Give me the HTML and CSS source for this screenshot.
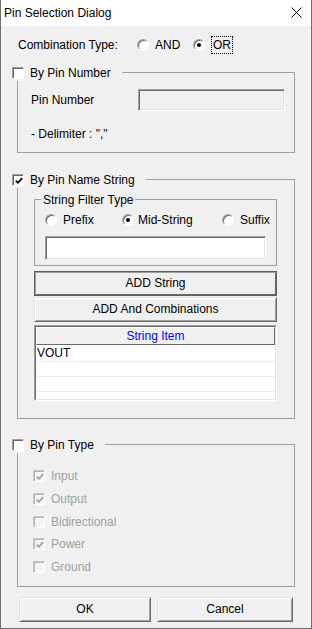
FILE: index.html
```html
<!DOCTYPE html>
<html lang="en">
<head>
    <meta charset="UTF-8">
    <title>Pin Selection Dialog</title>
    <link rel="stylesheet" href="styles.css">
</head>
<body>
<div class="window">
    <div class="titlebar">
        <span class="title">Pin Selection Dialog</span>
        <svg class="close" width="11" height="11" viewBox="0 0 11 11">
            <path d="M0.5 0.5 L10.5 10.5 M10.5 0.5 L0.5 10.5" stroke="#000" stroke-width="1" fill="none"/>
        </svg>
    </div>

    <div class="combo">
        <span class="combo-label">Combination Type:</span>
        <span class="opt opt-and"><span class="radio"></span>AND</span>
        <span class="opt"><span class="radio on"></span><span class="focus">OR</span></span>
    </div>

    <!-- by pin number -->
    <div class="group group-num">
        <div class="group-title"><span class="check"></span>By Pin Number</div>
        <div class="field-row">
            <span class="field-label">Pin Number</span>
            <span class="edit edit-off"></span>
        </div>
        <div class="note">- Delimiter : ","</div>
    </div>

    <!-- by pin name string -->
    <div class="group group-name">
        <div class="group-title">
            <span class="check">
                <svg width="8" height="8" viewBox="0 0 8 8"><polyline points="0.8,3.6 2.9,5.8 7.2,1.2" stroke="#000" stroke-width="1.8" fill="none"/></svg>
            </span>By Pin Name String
        </div>

        <div class="subgroup">
            <div class="sub-title">String Filter Type</div>
            <div class="radio-row">
                <span class="opt opt-prefix"><span class="radio"></span>Prefix</span>
                <span class="opt opt-mid"><span class="radio on"></span>Mid-String</span>
                <span class="opt opt-suffix"><span class="radio"></span>Suffix</span>
            </div>
            <span class="edit edit-filter"></span>
        </div>

        <div class="btn btn-default btn-wide">ADD String</div>
        <div class="btn btn-wide btn-combo">ADD And Combinations</div>

        <div class="list">
            <div class="list-inner">
                <div class="list-head">String Item</div>
                <div class="list-row first">VOUT</div>
                <div class="list-row"></div>
                <div class="list-row"></div>
                <div class="list-row"></div>
            </div>
        </div>
    </div>

    <!-- by pin type -->
    <div class="group group-type">
        <div class="group-title"><span class="check"></span>By Pin Type</div>
        <div class="type-list">
            <div class="type-item"><span class="check off"><svg width="8" height="8" viewBox="0 0 8 8"><polyline points="0.8,3.6 2.9,5.8 7.2,1.2" stroke="#a0a0a0" stroke-width="1.8" fill="none"/></svg></span>Input</div>
            <div class="type-item"><span class="check off"><svg width="8" height="8" viewBox="0 0 8 8"><polyline points="0.8,3.6 2.9,5.8 7.2,1.2" stroke="#a0a0a0" stroke-width="1.8" fill="none"/></svg></span>Output</div>
            <div class="type-item"><span class="check off"></span>Bidirectional</div>
            <div class="type-item"><span class="check off"><svg width="8" height="8" viewBox="0 0 8 8"><polyline points="0.8,3.6 2.9,5.8 7.2,1.2" stroke="#a0a0a0" stroke-width="1.8" fill="none"/></svg></span>Power</div>
            <div class="type-item"><span class="check off"></span>Ground</div>
        </div>
    </div>

    <div class="buttons">
        <div class="btn btn-ok">OK</div>
        <div class="btn btn-cancel">Cancel</div>
    </div>
</div>
</body>
</html>
```

FILE: styles.css
```css
body {
    margin: 0;
    background-color: #f0f0f0;
    font: 12px "Liberation Sans", Arial, sans-serif;
    color: #000;
}

.window {
    width: 312px;
    height: 629px;
    box-sizing: border-box;
    border: 1px solid #6e6e6e;
    border-top: none;
    background-color: #f0f0f0;
    overflow: hidden;
}

.titlebar {
    height: 26px;
    background-color: #fff;
    display: flex;
    align-items: center;
    justify-content: space-between;
    padding: 0 9px 1px 3px;
    box-sizing: border-box;
}

.combo {
    margin-top: 10px;
    height: 18px;
    padding-left: 17px;
    display: flex;
    align-items: center;
}

.combo-label {
    width: 119px;
}

.opt {
    display: flex;
    align-items: center;
}

.opt-and {
    width: 56px;
}

.opt-and .radio {
    margin-right: 6px;
}

.focus {
    outline: 1px dotted #000;
    padding: 0 1px;
    line-height: 16px;
    margin-left: 1px;
}

/* radio + checkbox */
.radio {
    width: 12px;
    height: 12px;
    box-sizing: border-box;
    border-radius: 50%;
    border: 1px solid;
    border-color: #a0a0a0 #fff #fff #a0a0a0;
    box-shadow: inset 1px 1px 0 #696969;
    background-color: #fff;
    margin-right: 6px;
    display: inline-flex;
    align-items: center;
    justify-content: center;
    flex-shrink: 0;
}

.radio.on::after {
    content: "";
    width: 4px;
    height: 4px;
    border-radius: 50%;
    background-color: #000;
}

.check {
    width: 12px;
    height: 12px;
    box-sizing: border-box;
    border: 1px solid;
    border-color: #a0a0a0 #fff #fff #a0a0a0;
    box-shadow: inset 1px 1px 0 #696969;
    background-color: #fff;
    margin-right: 6px;
    display: inline-flex;
    align-items: center;
    justify-content: center;
    padding: 1px 0 0 1px;
    flex-shrink: 0;
}

.check.off {
    background-color: #f4f4f4;
    border-color: #c8c8c8 #fff #fff #c8c8c8;
    box-shadow: inset 1px 1px 0 #b4b4b4;
}

/* group boxes */
.group {
    margin: 0 16px;
    border: 1px solid #a0a0a0;
    box-sizing: border-box;
}

.group-title {
    margin: -8px 0 0 -6px;
    height: 16px;
    width: max-content;
    display: flex;
    align-items: center;
    background-color: #f0f0f0;
    padding-right: 11px;
}

.group-num {
    margin-top: 18px;
    height: 81px;
}

.field-row {
    margin-top: 8px;
    height: 22px;
    padding-left: 13px;
    display: flex;
    align-items: center;
}

.field-label {
    width: 107px;
}

.edit {
    display: block;
    box-sizing: border-box;
    border: 1px solid;
    border-color: #a0a0a0 #fff #fff #a0a0a0;
    box-shadow: inset 1px 1px 0 #696969, inset -1px -1px 0 #e3e3e3;
    background-color: #fff;
}

.edit-off {
    width: 147px;
    height: 22px;
    background-color: #f0f0f0;
}

.note {
    margin-top: 16px;
    height: 14px;
    line-height: 14px;
    padding-left: 13px;
}

.group-name {
    margin-top: 26px;
    height: 240px;
}

.subgroup {
    margin: 11px 0 0 16px;
    width: 243px;
    height: 67px;
    border: 1px solid #a0a0a0;
    box-sizing: border-box;
}

.sub-title {
    margin: -8px 0 0 6px;
    height: 16px;
    line-height: 16px;
    width: max-content;
    padding: 0 2px;
    background-color: #f0f0f0;
}

.radio-row {
    margin-top: 4px;
    height: 16px;
    padding-left: 10px;
    display: flex;
    align-items: center;
}

.opt-prefix {
    width: 77px;
}

.opt-mid {
    width: 100px;
}

.opt-mid .radio {
    margin-right: 4px;
}

.edit-filter {
    margin: 8px 0 0 10px;
    width: 221px;
    height: 24px;
}

/* buttons */
.btn {
    box-sizing: border-box;
    height: 25px;
    display: flex;
    align-items: center;
    justify-content: center;
    background-color: #f0f0f0;
    border: 1px solid;
    border-color: #e3e3e3 #696969 #696969 #e3e3e3;
    box-shadow: inset 1px 1px 0 #fff, inset -1px -1px 0 #a0a0a0;
    padding-bottom: 1px;
}

.btn-wide {
    margin-left: 16px;
    width: 243px;
}

.btn-default {
    margin-top: 5px;
    border-color: #5f5f5f;
    box-shadow: inset 1px 1px 0 #a0a0a0, inset -1px -1px 0 #696969;
}

.btn-combo {
    margin-top: 1px;
}

/* list */
.list {
    margin: 3px 0 0 16px;
    width: 243px;
    height: 76px;
    box-sizing: border-box;
    border: 1px solid;
    border-color: #a0a0a0 #fff #fff #a0a0a0;
}

.list-inner {
    height: 100%;
    box-sizing: border-box;
    border: 1px solid;
    border-color: #696969 #e3e3e3 #e3e3e3 #696969;
    background-color: #fff;
    overflow: hidden;
}

.list-head {
    height: 18px;
    box-sizing: border-box;
    background-color: #f0f0f0;
    color: #0000ff;
    text-align: center;
    line-height: 16px;
    border: 1px solid;
    border-color: #fff #696969 #696969 #fff;
}

.list-row {
    height: 15px;
    box-sizing: border-box;
    border-bottom: 1px solid #ececec;
    padding-left: 1px;
    line-height: 14px;
}

.list-row.first {
    height: 17px;
    line-height: 17px;
}

/* pin type */
.group-type {
    margin-top: 25px;
    height: 143px;
}

.type-list {
    margin-top: 12px;
    padding-left: 15px;
}

.type-item {
    height: 22.7px;
    display: flex;
    align-items: center;
    color: #a0a0a0;
}

.buttons {
    margin: 10px 0 0 18px;
    display: flex;
    gap: 6px;
}

.btn-ok {
    width: 132px;
}

.btn-cancel {
    width: 136px;
}
```
